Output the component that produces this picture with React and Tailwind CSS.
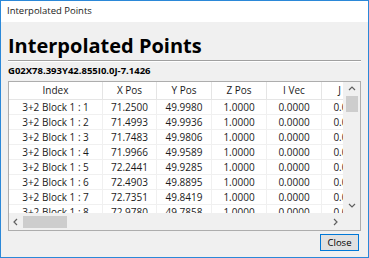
import React from "react";

const rows = [
  ["3+2 Block 1 : 1", "71.2500", "49.9980"],
  ["3+2 Block 1 : 2", "71.4993", "49.9936"],
  ["3+2 Block 1 : 3", "71.7483", "49.9806"],
  ["3+2 Block 1 : 4", "71.9966", "49.9589"],
  ["3+2 Block 1 : 5", "72.2441", "49.9285"],
  ["3+2 Block 1 : 6", "72.4903", "49.8895"],
  ["3+2 Block 1 : 7", "72.7351", "49.8419"],
  ["3+2 Block 1 : 8", "72.9780", "49.7858"],
];

const cols = [
  { name: "Index", w: "w-[94px]" },
  { name: "X Pos", w: "w-[54px]" },
  { name: "Y Pos", w: "w-[55px]" },
  { name: "Z Pos", w: "w-[55px]" },
  { name: "I Vec", w: "w-[55px]" },
  { name: "J Vec", w: "w-[55px]" },
];

function Chevron({ dir }) {
  const d = {
    up: "M1 5 L4 2 L7 5",
    down: "M1 2 L4 5 L7 2",
    left: "M5 1 L2 4 L5 7",
    right: "M2 1 L5 4 L2 7",
  }[dir];
  return (
    <svg width="8" height="8" viewBox="0 0 8 8">
      <path d={d} fill="none" stroke="#606060" strokeWidth="1.2" />
    </svg>
  );
}

export default function App() {
  return (
    <div
      className="w-[369px] h-[258px] border border-[#2b88d8] bg-[#f0f0f0] flex flex-col overflow-hidden"
      style={{ fontFamily: '"Open Sans", "Noto Sans", sans-serif' }}
    >
      {/* title bar */}
      <div className="h-[21px] bg-white flex items-center pl-[6px] text-[9.5px] text-[#1a1a1a]">
        Interpolated Points
      </div>

      <div className="flex-1 flex flex-col px-[7px]">
        <h1 className="mt-[12px] text-[20px] leading-[24px] font-bold text-black">
          Interpolated Points
        </h1>
        <div className="mt-[2px] h-[2px] border-t border-[#a0a0a0] border-b border-b-white" />
        <div className="mt-[3px] text-[9.5px] leading-[12px] font-bold text-black">
          G02X78.393Y42.855I0.0J-7.1426
        </div>

        {/* list view */}
        <div className="mt-[4px] h-[150px] border border-[#adadad] bg-white grid grid-cols-[1fr_17px] grid-rows-[1fr_17px] text-[10px] text-[#1a1a1a]">
          <div className="overflow-hidden">
            <div className="flex h-[18px] border-b border-[#e5e5e5]">
              {cols.map((c) => (
                <div
                  key={c.name}
                  className={`${c.w} shrink-0 flex items-center justify-center border-r border-[#e5e5e5]`}
                >
                  {c.name}
                </div>
              ))}
            </div>
            {rows.map((r) => (
              <div key={r[0]} className="flex h-[15px] border-b border-[#f0f0f0]">
                {[r[0], r[1], r[2], "1.0000", "0.0000", "0.0000"].map((v, i) => (
                  <div
                    key={i}
                    className={`${cols[i].w} shrink-0 flex items-center justify-center border-r border-[#f0f0f0]`}
                  >
                    {v}
                  </div>
                ))}
              </div>
            ))}
          </div>

          {/* vertical scrollbar */}
          <div className="bg-[#f0f0f0] flex flex-col items-center">
            <div className="h-[14px] flex items-center justify-center">
              <Chevron dir="up" />
            </div>
            <div className="w-[12px] h-[16px] bg-[#cdcdcd]" />
            <div className="flex-1" />
            <div className="h-[14px] flex items-center justify-center">
              <Chevron dir="down" />
            </div>
          </div>

          {/* horizontal scrollbar */}
          <div className="bg-[#f0f0f0] flex items-center">
            <div className="w-[14px] flex items-center justify-center">
              <Chevron dir="left" />
            </div>
            <div className="w-[44px] h-[12px] bg-[#cdcdcd]" />
            <div className="flex-1" />
            <div className="w-[14px] flex items-center justify-center">
              <Chevron dir="right" />
            </div>
          </div>
          <div className="bg-[#f0f0f0]" />
        </div>

        <div className="flex justify-end mt-[3px] pr-[2px]">
          <button className="w-[39px] h-[17px] bg-[#e1e1e1] border border-[#0078d7] text-[9.5px] leading-none text-black">
            Close
          </button>
        </div>
      </div>
    </div>
  );
}
